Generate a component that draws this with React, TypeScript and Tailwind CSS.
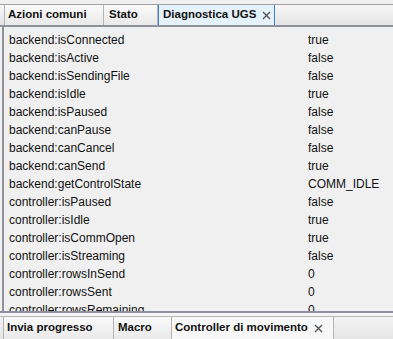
import React from "react";

const rows: [string, string][] = [
  ["backend:isConnected", "true"],
  ["backend:isActive", "false"],
  ["backend:isSendingFile", "false"],
  ["backend:isIdle", "true"],
  ["backend:isPaused", "false"],
  ["backend:canPause", "false"],
  ["backend:canCancel", "false"],
  ["backend:canSend", "true"],
  ["backend:getControlState", "COMM_IDLE"],
  ["controller:isPaused", "false"],
  ["controller:isIdle", "true"],
  ["controller:isCommOpen", "true"],
  ["controller:isStreaming", "false"],
  ["controller:rowsInSend", "0"],
  ["controller:rowsSent", "0"],
  ["controller:rowsRemaining", "0"],
];

function Close() {
  return (
    <svg width="9" height="9" viewBox="0 0 9 9" className="ml-[6px] shrink-0">
      <path d="M1 1L8 8M8 1L1 8" stroke="#555" strokeWidth="1.4" />
    </svg>
  );
}

export default function App() {
  const font = { fontFamily: '"Liberation Sans", Arial, sans-serif' };
  return (
    <div className="w-[393px] h-[339px] bg-[#f0f0f0] overflow-hidden flex flex-col text-[12px] text-[#111] whitespace-nowrap" style={font}>
      {/* top tab bar */}
      <div className="h-[23px] shrink-0 flex items-end border-b-[2px] border-[#8e9199] bg-gradient-to-b from-[#f6f6f6] to-[#e5e5e5] border-t border-t-[#a0a0a0] mt-[4px]">
        <div className="flex h-[20px] pl-[4px]">
          <div className="w-[100px] border-l border-r border-[#b5b5b5] bg-gradient-to-b from-[#fafafa] to-[#e9e9e9] flex items-center pl-[3px] font-bold text-[11.5px]">Azioni comuni</div>
          <div className="w-[54px] border-r border-[#b5b5b5] bg-gradient-to-b from-[#fafafa] to-[#e9e9e9] flex items-center pl-[5px] font-bold text-[11.5px]">Stato</div>
          <div className="w-[117px] border-l border-r border-[#3d84c6] bg-[#e5f1fb] flex items-center pl-[4px] font-bold text-[11.5px]">Diagnostica UGS<Close /></div>
        </div>
      </div>
      {/* content */}
      <div className="h-[284px] shrink-0 overflow-hidden border-l-[2px] border-[#8e9199] ml-[2px] pt-[4px]">
        {rows.map(([k, v]) => (
          <div key={k} className="h-[18px] flex items-center">
            <div className="w-[304px] pl-[5px]">{k}</div>
            <div>{v}</div>
          </div>
        ))}
      </div>
      {/* bottom tab bar */}
      <div className="h-[28px] shrink-0 border-t-[2px] border-[#8e9199] bg-gradient-to-b from-[#f6f6f6] to-[#e5e5e5] flex items-end">
        <div className="flex h-[23px] pl-[3px] border-t border-[#b5b5b5] w-full">
          <div className="w-[111px] border-l border-r border-[#b5b5b5] flex items-center pl-[3px] font-bold text-[11.5px] bg-gradient-to-b from-[#fafafa] to-[#e9e9e9]">Invia progresso</div>
          <div className="w-[58px] border-r border-[#b5b5b5] flex items-center pl-[4px] font-bold text-[11.5px] bg-gradient-to-b from-[#fafafa] to-[#e9e9e9]">Macro</div>
          <div className="w-[162px] border-r border-[#b5b5b5] flex items-center pl-[3px] font-bold text-[11.5px] bg-[#f7f7f7]">Controller di movimento<Close /></div>
        </div>
      </div>
    </div>
  );
}
